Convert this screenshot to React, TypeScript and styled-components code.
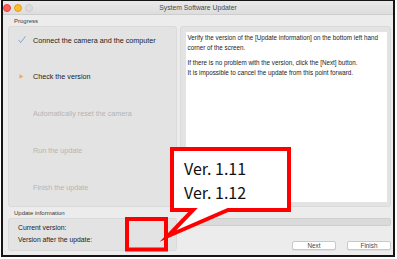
import React from "react";
import styled, { createGlobalStyle } from "styled-components";

const GlobalStyle = createGlobalStyle`
  html, body { margin: 0; padding: 0; background: #ffffff; }
  body { font-family: "Liberation Sans", Arial, sans-serif; }
  * { box-sizing: border-box; }
`;

const Page = styled.div`
  position: relative;
  width: 397px;
  height: 259px;
  overflow: hidden;
`;

const Window = styled.div`
  margin-left: 1px;
  width: 394px;
  height: 257px;
  border: 2px solid #151515;
  border-top-width: 1px;
  background: #ececec;
  display: flex;
  flex-direction: column;
`;

const TitleBar = styled.div`
  height: 14px;
  flex: none;
  display: grid;
  grid-template-columns: 1fr auto 1fr;
  align-items: center;
  background: linear-gradient(#e9e9e9, #dddddd);
  border-bottom: 1px solid #cdcdcd;
`;

const Lights = styled.div`
  display: flex;
  gap: 3px;
  align-items: center;
`;

const Light = styled.span<{ $c: string; $b: string }>`
  width: 8px;
  height: 8px;
  border-radius: 50%;
  background: ${(p) => p.$c};
  border: 0.5px solid ${(p) => p.$b};
`;

const Title = styled.div`
  font-size: 6.8px;
  color: #4a4a4a;
  white-space: nowrap;
`;

const Body = styled.div`
  flex: 1;
  display: grid;
  grid-template-columns: 169px 1fr;
  grid-template-rows: 11px 181px 11px 33px;
  column-gap: 3px;
  padding: 0 2px 0 5px;
`;

const GroupLabel = styled.div`
  grid-column: 1 / span 2;
  font-size: 6px;
  color: #3a3a3a;
  padding-left: 6px;
  align-self: center;
  line-height: 8px;
`;

const StepsPanel = styled.div`
  background: #e3e3e3;
  border: 0.5px solid #dadada;
  border-radius: 3px;
  display: flex;
  flex-direction: column;
  gap: 10.8px;
`;

const Step = styled.div<{ $done?: boolean; $active?: boolean }>`
  height: 26px;
  display: grid;
  grid-template-columns: 24px 1fr;
  align-items: center;
  font-size: 7.2px;
  color: ${(p) => (p.$done || p.$active ? "#222222" : "#b4b4b4")};
  white-space: nowrap;
`;

const StepIcon = styled.div`
  display: flex;
  justify-content: center;
  align-items: center;
  padding-left: 1px;
`;

const MessagePanel = styled.div`
  background: #e3e3e3;
  border: 0.5px solid #dadada;
  border-radius: 3px;
  padding: 4.5px 3.5px 4.5px 4.5px;
  display: flex;
`;

const MessageBox = styled.div`
  flex: 1;
  background: #ffffff;
  padding: 1.5px 2px;
  font-size: 6.3px;
  line-height: 9.5px;
  color: #1a1a1a;
`;

const Para = styled.p`
  margin: 0 0 6px 0;
`;

const InfoBox = styled.div`
  background: #e3e3e3;
  border: 0.5px solid #dadada;
  border-radius: 3px;
  padding: 5px 0 0 9px;
  display: flex;
  flex-direction: column;
  gap: 4px;
  font-size: 6.8px;
  line-height: 8px;
  color: #222222;
`;

const RightBottom = styled.div`
  display: flex;
  flex-direction: column;
  justify-content: space-between;
`;

const ProgressTrack = styled.div`
  height: 8px;
  background: #dadada;
  border: 0.5px solid #cfcfcf;
  border-radius: 2px;
`;

const Buttons = styled.div`
  display: flex;
  justify-content: flex-end;
  gap: 11px;
  padding-bottom: 1px;
`;

const Button = styled.button`
  width: 44px;
  height: 9.5px;
  padding: 0;
  border: 0.5px solid #c9c9c9;
  border-radius: 2px;
  background: #ffffff;
  font-family: "Liberation Sans", Arial, sans-serif;
  font-size: 6.3px;
  line-height: 8px;
  color: #444444;
  box-shadow: 0 0.5px 0.5px rgba(0, 0, 0, 0.12);
`;

const Annotation = styled.svg`
  position: absolute;
  left: 0;
  top: 0;
  pointer-events: none;
`;

const CalloutText = styled.text`
  font-family: "Noto Sans CJK JP", "DejaVu Sans", sans-serif;
  font-size: 16px;
  fill: #111111;
`;

const Check = () => (
  <svg width="8" height="8" viewBox="0 0 8 8">
    <path d="M0.8 4.2 L2.6 6.6 L7.2 0.6" fill="none" stroke="#6fa3da" strokeWidth="0.9" strokeLinecap="round" strokeLinejoin="round" />
  </svg>
);

const Arrow = () => (
  <svg width="5" height="5" viewBox="0 0 5 5">
    <path d="M0.5 0.3 L4.3 2.5 L0.5 4.7 Z" fill="#f3a65a" />
  </svg>
);

const steps = [
  { label: "Connect the camera and the computer", state: "done" },
  { label: "Check the version", state: "active" },
  { label: "Automatically reset the camera", state: "todo" },
  { label: "Run the update", state: "todo" },
  { label: "Finish the update", state: "todo" },
];

export default function App() {
  return (
    <Page>
      <GlobalStyle />
      <Window>
        <TitleBar>
          <Lights>
            <Light $c="#fc5f57" $b="#e2463f" />
            <Light $c="#fdbc2e" $b="#e0a123" />
            <Light $c="#dcdcdc" $b="#cbcbcb" />
          </Lights>
          <Title>System Software Updater</Title>
          <div />
        </TitleBar>
        <Body>
          <GroupLabel>Progress</GroupLabel>
          <StepsPanel>
            {steps.map((s) => (
              <Step key={s.label} $done={s.state === "done"} $active={s.state === "active"}>
                <StepIcon>
                  {s.state === "done" && <Check />}
                  {s.state === "active" && <Arrow />}
                </StepIcon>
                <span>{s.label}</span>
              </Step>
            ))}
          </StepsPanel>
          <MessagePanel>
            <MessageBox>
              <Para>
                Verify the version of the [Update information] on the bottom left hand corner of the screen.
              </Para>
              <Para>
                If there is no problem with the version, click the [Next] button.
                <br />
                It is impossible to cancel the update from this point forward.
              </Para>
            </MessageBox>
          </MessagePanel>
          <GroupLabel>Update information</GroupLabel>
          <InfoBox>
            <div>Current version:</div>
            <div>Version after the update:</div>
          </InfoBox>
          <RightBottom>
            <ProgressTrack />
            <Buttons>
              <Button>Next</Button>
              <Button>Finish</Button>
            </Buttons>
          </RightBottom>
        </Body>
      </Window>
      <Annotation width="397" height="259" viewBox="0 0 397 259">
        <path
          d="M172 149 H289 V210 H228 L168 236 L193 210 H172 Z"
          fill="#ffffff"
          stroke="#ff0000"
          strokeWidth="4"
          strokeLinejoin="miter"
          strokeMiterlimit="10"
        />
        <rect x="127" y="219" width="39" height="30.5" fill="none" stroke="#ff0000" strokeWidth="4" />
        <CalloutText x="184" y="175">Ver. 1.11</CalloutText>
        <CalloutText x="184" y="199">Ver. 1.12</CalloutText>
      </Annotation>
    </Page>
  );
}
